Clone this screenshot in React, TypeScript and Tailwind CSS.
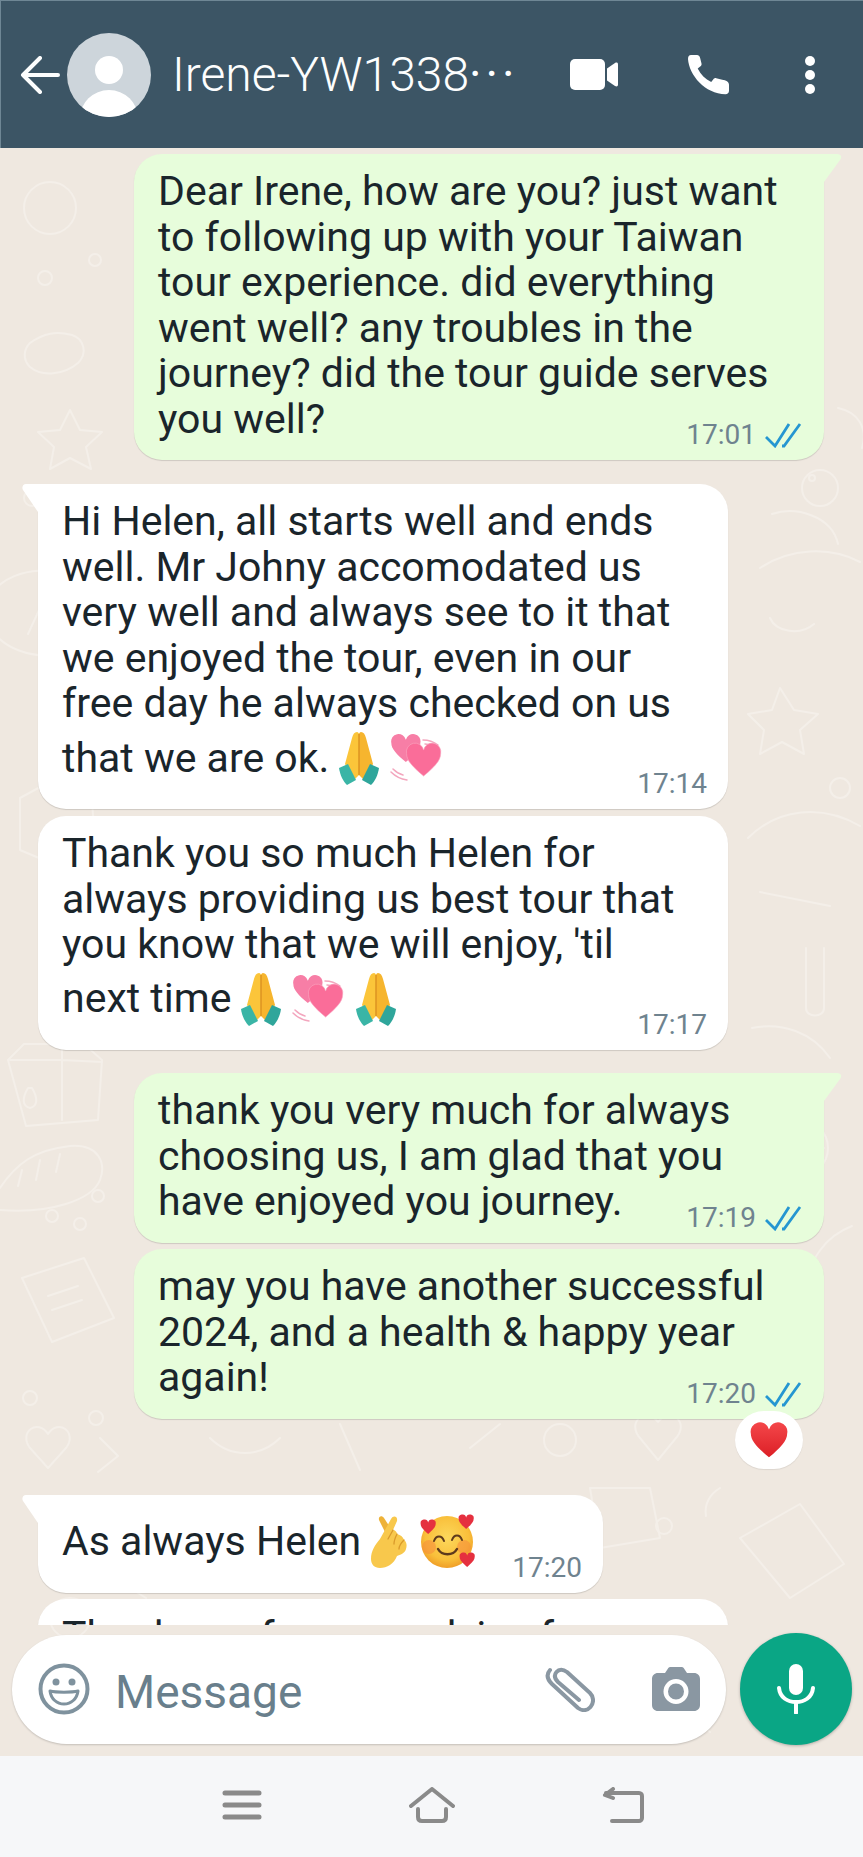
import type { ReactNode } from 'react'

const HEART = 'M12 22C5 16 1 12 1 7.5A5.6 5.6 0 0 1 12 5.2 5.6 5.6 0 0 1 23 7.5C23 12 19 16 12 22Z'

function Pray({ className = '' }: { className?: string }) {
  return (
    <svg className={className} width="40" height="54" viewBox="0 0 40 54">
      <path d="M18 1C15.500 1 14 3 13 7L6 33C8 37 13 43 16 48L20 44V3C20 2 19 1 18 1Z" fill="#fbc53a" />
      <path d="M22 1C24.500 1 26 3 27 7L34 33C32 37 27 43 24 48L20 44V3C20 2 21 1 22 1Z" fill="#f6b52e" />
      <path d="M20 3V44" stroke="#dd9322" strokeWidth="1.500" />
      <path d="M0 37L9 33L17 49L8 54C4 50 1 44 0 37Z" fill="#3ab5a6" />
      <path d="M40 37L31 33L23 49L32 54C36 50 39 44 40 37Z" fill="#2fa69b" />
    </svg>
  )
}

function Hearts({ className = '' }: { className?: string }) {
  return (
    <svg className={className} width="52" height="50" viewBox="0 0 52 50" fill="none">
      <path d="M33 7C39 7 44 9 48 12M35 11C39 11 42 12 45 14" stroke="#f3a6be" strokeWidth="1.500" strokeLinecap="round" />
      <path d="M1 39C5 43 10 46 17 47M3 36C6 39 9 41 13 42" stroke="#f3a6be" strokeWidth="1.500" strokeLinecap="round" />
      <g transform="translate(0 0) scale(1.320)">
        <path d={HEART} fill="#f77ea6" />
      </g>
      <g transform="translate(15 9) scale(1.550)">
        <path d={HEART} fill="#fa6d99" stroke="#f9a8c2" strokeWidth=".4" />
      </g>
    </svg>
  )
}

function CrossedFingers({ className = '' }: { className?: string }) {
  return (
    <svg className={className} width="38" height="54" viewBox="0 0 38 54">
      <path d="M9 5C8 1 12 0 14 3L25 20L18 23Z" fill="#eeb238" />
      <path d="M1 44C1 36 5 30 10 24L21 4C23 0 28 1 27 6L23 15C25 15 27 17 27 19C31 20 33 22 34 25C37 27 37 31 36 34C35 38 30 40 27 41C24 49 17 53 10 53C4 53 1 49 1 44Z" fill="#f8c84c" />
      <path d="M23 15L18 24M27 19C25 23 24 26 24 29M34 25C31 28 29 31 29 34" fill="none" stroke="#d99a2b" strokeWidth="1.300" strokeLinecap="round" />
    </svg>
  )
}

function SmilingHearts({ className = '' }: { className?: string }) {
  return (
    <svg className={className} width="55" height="55" viewBox="0 0 55 55">
      <defs>
        <radialGradient id="face" cx="50%" cy="42%" r="60%">
          <stop offset="0%" stopColor="#fcd85c" />
          <stop offset="70%" stopColor="#f9bf3a" />
          <stop offset="100%" stopColor="#ee9a25" />
        </radialGradient>
      </defs>
      <circle cx="27" cy="28" r="26" fill="url(#face)" />
      <circle cx="9" cy="33" r="7" fill="#f58a3c" opacity=".55" />
      <circle cx="44" cy="33" r="7" fill="#f58a3c" opacity=".55" />
      <path d="M14 27C16 21 22 21 24 27M32 26C34 20 40 20 42 26" fill="none" stroke="#5e3a1c" strokeWidth="2" strokeLinecap="round" />
      <path d="M18 35C22 42 33 42 37 35" fill="none" stroke="#5e3a1c" strokeWidth="2.500" strokeLinecap="round" />
      <g transform="translate(0 5) scale(.68)">
        <path d={HEART} fill="#e5303f" />
      </g>
      <g transform="translate(38 0) scale(.68)">
        <path d={HEART} fill="#e5303f" />
      </g>
      <g transform="translate(39 38) scale(.68)">
        <path d={HEART} fill="#e5303f" />
      </g>
    </svg>
  )
}

function Ticks() {
  return (
    <svg width="38" height="25" viewBox="0 0 38 25" fill="none" stroke="#2596d1" strokeWidth="2.800">
      <path d="M1 14L10 23L24 1" />
      <path d="M17 23L19 23L35 1" />
    </svg>
  )
}

function Tail({ side }: { side: 'in' | 'out' }) {
  if (side === 'out') {
    return (
      <svg className="absolute left-full top-0" width="18" height="28" viewBox="0 0 18 28">
        <path d="M0 0H13C17 0 18.500 3 16 6L0 28Z" fill="#e7fddb" />
      </svg>
    )
  }
  return (
    <svg className="absolute right-full top-0" width="16" height="28" viewBox="0 0 16 28">
      <path d="M16 0H4C1 0 -.5 3 1 6L16 28Z" fill="#ffffff" />
    </svg>
  )
}

interface BubbleProps {
  side: 'in' | 'out'
  time?: string
  height: string
  width?: string
  tail?: boolean
  children: ReactNode
  extra?: ReactNode
  className?: string
}

function Bubble({ side, time, height, width = 'w-[690px]', tail, children, extra, className = '' }: BubbleProps) {
  const out = side === 'out'
  return (
    <div
      className={`relative grid shrink-0 ${width} ${height} ${className} pl-6 pr-[21px] pb-[10px] rounded-[28px] shadow-[0_1px_1px_rgba(0,0,0,0.14)] ${
        out ? 'self-end mr-[39px] bg-[#e7fddb]' : 'self-start ml-[38px] bg-white'
      } ${tail ? (out ? 'rounded-tr-none' : 'rounded-tl-none') : ''}`}
    >
      {tail && <Tail side={side} />}
      <div className="[grid-area:1/1] pt-[15px] text-[41px] leading-[45.6px] text-[#1a252b] whitespace-nowrap">{children}</div>
      {time && (
        <div className="[grid-area:1/1] self-end justify-self-end flex items-center gap-[9px] h-[30px] text-[28px] text-[#6f838f]">
          <span>{time}</span>
          {out && <Ticks />}
        </div>
      )}
      {extra}
    </div>
  )
}

function EmojiRow({ children }: { children: ReactNode }) {
  return <div className="flex items-center h-[63px]">{children}</div>
}

function Wallpaper() {
  return (
    <svg className="absolute inset-0 w-full h-full" viewBox="0 0 863 1608" fill="none" stroke="#f4efe9" strokeWidth="2" strokeLinecap="round" strokeLinejoin="round">
      {/* left side */}
      <circle cx="50" cy="60" r="26" />
      <circle cx="45" cy="130" r="7" />
      <circle cx="95" cy="112" r="6" />
      <path d="M30 195c14-10 26-12 42-8 12 4 16 18 6 28-14 12-36 14-48 4-8-8-6-18 0-24z" />
      <path d="M70 262l10 20 22 2-16 15 5 22-21-11-20 11 4-22-16-15 22-2z" />
      <circle cx="32" cy="350" r="8" />
      <circle cx="108" cy="352" r="7" />
      <path d="M-6 442c22-24 68-26 92-4 22 22 14 56-18 66-34 10-70-4-80-30" />
      <path d="M40 460l-12 26M56 462l-12 30" />
      <path d="M20 650l22-12 50 16 4 50-38 14-38-16z" />
      <path d="M8 912l16-16h60l18 16 -4 60-72 6z" />
      <path d="M62 896v76M10 912h52l40 2" />
      <path d="M28 940c-6 10-6 18 2 20 8-2 8-10 2-20z" />
      <path d="M0 1040c16-24 34-38 70-42 30-2 36 18 30 34-8 20-50 34-100 30" />
      <path d="M22 1022l-4 16M40 1012l-4 20M60 1006l-4 18" />
      <circle cx="52" cy="1068" r="6" />
      <circle cx="80" cy="1076" r="6" />
      <circle cx="98" cy="1048" r="6" />
      <path d="M22 1130l62-20 30 60-62 24z" />
      <path d="M48 1148l30-10M52 1162l30-10" />
      <path d="M30 1300c-12-16 8-30 18-14 10-16 30-2 18 14l-18 20z" />
      <circle cx="30" cy="1250" r="7" />
      <circle cx="96" cy="1270" r="7" />
      {/* right side */}
      <circle cx="820" cy="340" r="18" />
      <path d="M838 260c20 4 30 20 24 40" />
      <circle cx="790" cy="296" r="6" />
      <path d="M772 366c24-8 60 2 66 30" />
      <circle cx="812" cy="330" r="3" />
      <path d="M760 420c30-20 70-22 100-6M770 470c6 14 30 18 44 6" />
      <path d="M780 540l14 22 24 4-18 16 4 24-22-12-22 12 4-24-16-16 24-4z" />
      <circle cx="840" cy="640" r="10" />
      <path d="M748 690c30-30 74-34 112-12M760 744l70 14" />
      <path d="M806 800v60c0 10 18 10 18 0v-60" />
      <path d="M752 880c30-6 60 4 78 30M790 950l-30 20" />
      <circle cx="800" cy="1000" r="28" />
      <path d="M776 1000h48M800 972c-12 18-12 38 0 56" />
      <path d="M852 1078c-26 10-44 34-44 60" />
      <circle cx="760" cy="1130" r="7" />
      <path d="M640 1290c-14-16 6-32 18-16 12-16 32 0 18 16l-18 22z" />
      <path d="M740 1390l60-34 44 60-54 34z" />
      <path d="M720 1340c-10 6-16 16-14 28" />
      <circle cx="664" cy="1378" r="8" />
      {/* bottom */}
      <path d="M100 1290l18 18-20 16M210 1290c20 20 50 20 70 0M340 1276l20 46M470 1300l30-24" />
      <circle cx="560" cy="1292" r="16" />
      <path d="M590 1340h60l10 50-60 10z" />
      <path d="M130 1440l16 10M780 1558c16-18 40-18 56 0M660 1580c20-14 36-14 50 4" />
      <circle cx="70" cy="1470" r="20" />
    </svg>
  )
}

export default function App() {
  return (
    <div className="w-[863px] h-[1857px] flex flex-col overflow-hidden font-['Roboto',sans-serif]">
      {/* Header */}
      <header className="h-[148px] shrink-0 flex items-center bg-[#3c5565] border-t border-l border-[#6f8795] pl-[19px] pr-[48px] text-[#fdfefe]">
        <svg width="40" height="38" viewBox="0 0 40 38" fill="none" stroke="currentColor" strokeWidth="4" strokeLinecap="round" strokeLinejoin="round">
          <path d="M38 19H3M20 2L3 19L20 36" />
        </svg>
        <svg className="ml-[7px]" width="84" height="84" viewBox="0 0 84 84">
          <defs>
            <clipPath id="avatar">
              <circle cx="42" cy="42" r="42" />
            </clipPath>
          </defs>
          <circle cx="42" cy="42" r="42" fill="#cdd5db" />
          <circle cx="42" cy="37" r="14" fill="#ffffff" />
          <ellipse cx="42" cy="85" rx="29" ry="28" fill="#ffffff" clipPath="url(#avatar)" />
        </svg>
        <span className="ml-[21px] text-[48px] font-light leading-none whitespace-nowrap">
          Irene-YW1338<span className="tracking-[4px] font-normal">···</span>
        </span>
        <svg className="ml-auto" width="48" height="31" viewBox="0 0 48 31" fill="#ffffff">
          <rect x="0" y="0" width="35" height="31" rx="5" />
          <path d="M37 9.500L45 4C46.500 3 48 3.500 48 5.500V25.500C48 27.500 46.500 28 45 27L37 21.500Z" />
        </svg>
        <svg className="ml-[70px]" width="42" height="41" viewBox="0 0 42 41" fill="#ffffff">
          <path d="M3 1H9C10.500 1 11.500 2 12 3.500L13.500 9.500C13.800 10.800 13.200 11.800 12.200 12.500L9.700 14.500C12.700 20.500 17.200 25 23.200 28L25.200 25.500C26 24.500 27 23.900 28.200 24.200L34.200 25.700C38 26.200 41 27.700 41 30.700V36.700C41 38.700 39.500 40.200 37.500 40.200C17 40 1 21 0 5C0 2.500 1 1 3 1Z" />
        </svg>
        <div className="ml-[75px] flex flex-col gap-[4px]">
          <span className="w-[10px] h-[10px] rounded-full bg-white" />
          <span className="w-[10px] h-[10px] rounded-full bg-white" />
          <span className="w-[10px] h-[10px] rounded-full bg-white" />
        </div>
      </header>

      <main className="relative flex-1 flex flex-col bg-[#efe8e0] overflow-hidden">
        <Wallpaper />

        {/* Messages */}
        <div className="relative h-[1477px] shrink-0 overflow-hidden flex flex-col pt-[6px]">
          <Bubble side="out" tail time="17:01" height="h-[306px]">
            Dear Irene, how are you? just want<br />
            to following up with your Taiwan<br />
            tour experience. did everything<br />
            went well? any troubles in the<br />
            journey? did the tour guide serves<br />
            you well?
          </Bubble>

          <Bubble side="in" tail time="17:14" height="h-[325px]" className="mt-[24px]">
            Hi Helen, all starts well and ends<br />
            well. Mr Johny accomodated us<br />
            very well and always see to it that<br />
            we enjoyed the tour, even in our<br />
            free day he always checked on us
            <EmojiRow>
              that we are ok.
              <Pray className="ml-[10px]" />
              <Hearts className="ml-[11px]" />
            </EmojiRow>
          </Bubble>

          <Bubble side="in" time="17:17" height="h-[234px]" className="mt-[7px]">
            Thank you so much Helen for<br />
            always providing us best tour that<br />
            you know that we will enjoy, 'til
            <EmojiRow>
              next time
              <Pray className="ml-[10px]" />
              <Hearts className="ml-[11px]" />
              <Pray className="ml-[12px]" />
            </EmojiRow>
          </Bubble>

          <Bubble side="out" tail time="17:19" height="h-[170px]" className="mt-[23px]">
            thank you very much for always<br />
            choosing us, I am glad that you<br />
            have enjoyed you journey.
          </Bubble>

          <Bubble
            side="out"
            time="17:20"
            height="h-[170px]"
            className="mt-[6px] z-10"
            extra={
              <div className="absolute right-[21px] top-[162px] w-[68px] h-[58px] rounded-full bg-white flex items-center justify-center shadow-[0_1px_1px_rgba(0,0,0,0.08)]">
                <svg width="42" height="38" viewBox="0 0 24 23">
                  <defs>
                    <linearGradient id="red" x1="0" y1="0" x2="0" y2="1">
                      <stop offset="0%" stopColor="#f4474a" />
                      <stop offset="100%" stopColor="#dc1f26" />
                    </linearGradient>
                  </defs>
                  <path d={HEART} fill="url(#red)" />
                </svg>
              </div>
            }
          >
            may you have another successful<br />
            2024, and a health &amp; happy year<br />
            again!
          </Bubble>

          <Bubble side="in" tail time="17:20" height="h-[98px]" width="w-[565px]" className="mt-[76px]">
            <EmojiRow>
              As always Helen
              <CrossedFingers className="ml-[9px]" />
              <SmilingHearts className="ml-[12px]" />
            </EmojiRow>
          </Bubble>

          <Bubble side="in" height="h-[98px]" className="mt-[6px]">
            Thank you for your advice for
          </Bubble>
        </div>

        {/* Composer */}
        <div className="relative flex items-center gap-[14px] pl-[12px] mt-[8px]">
          <div className="flex items-center w-[714px] h-[109px] rounded-full bg-white pl-[26px] pr-[26px] shadow-[0_1px_2px_rgba(0,0,0,0.18)]">
            <svg width="52" height="52" viewBox="0 0 52 52" fill="none">
              <circle cx="26" cy="26" r="23.500" stroke="#7f929e" strokeWidth="4" />
              <circle cx="18" cy="19" r="3.500" fill="#7f929e" />
              <circle cx="34" cy="19" r="3.500" fill="#7f929e" />
              <path d="M12 28C18 29.500 34 29.500 40 28C39 36 33 41 26 41C19 41 13 36 12 28Z" stroke="#7f929e" strokeWidth="3" strokeLinejoin="round" />
            </svg>
            <span className="ml-[25px] pt-[6px] text-[46px] leading-none text-[#697f8c]">Message</span>
            <svg className="ml-auto" width="50" height="46" viewBox="0 0 50 46" fill="none" stroke="#8a97a2" strokeWidth="4" strokeLinecap="round" strokeLinejoin="round">
              <path d="M34 34L13 16C9.500 12.500 9 9 11.500 6C14 3 18 3 22 6L45 27C49 31 49 37 45.500 41C42 45 37 45 33 42L7 18C2 13 1 8.500 5 4" />
            </svg>
            <svg className="ml-[57px]" width="48" height="44" viewBox="0 0 48 44">
              <path fillRule="evenodd" d="M6 6H13L16 1.500C16.500.5 17.500 0 18.500 0H29.500C30.500 0 31.500.5 32 1.500L35 6H42C45.500 6 48 8.500 48 12V38C48 41.500 45.500 44 42 44H6C2.500 44 0 41.500 0 38V12C0 8.500 2.500 6 6 6ZM24 12A12.500 12.500 0 1 0 24 37 12.500 12.500 0 1 0 24 12ZM24 16.500A8 8 0 1 1 24 32.500 8 8 0 1 1 24 16.500Z" fill="#8a97a2" />
            </svg>
          </div>
          <div className="flex items-center justify-center w-[112px] h-[112px] shrink-0 rounded-full bg-[#0aa685] shadow-[0_1px_3px_rgba(0,0,0,0.25)]">
            <svg width="38" height="50" viewBox="0 0 38 50" fill="none">
              <rect x="12" y="0" width="14" height="31" rx="7" fill="#ffffff" />
              <path d="M2 24C3 34 11 38 19 38C27 38 35 34 36 24" stroke="#ffffff" strokeWidth="4" strokeLinecap="round" />
              <path d="M19 38V49" stroke="#ffffff" strokeWidth="4" strokeLinecap="round" />
            </svg>
          </div>
        </div>
      </main>

      {/* Nav bar */}
      <nav className="h-[101px] shrink-0 flex items-center justify-center gap-[145px] bg-[#f6f7f9] pb-[4px] text-[#8a8a8a]">
        <svg width="46" height="34" viewBox="0 0 46 34" fill="none" stroke="currentColor" strokeWidth="5" strokeLinecap="round">
          <path d="M7 5H41M7 17H41M7 29H41" />
        </svg>
        <svg width="46" height="36" viewBox="0 0 46 36" fill="none" stroke="currentColor" strokeWidth="4" strokeLinecap="round" strokeLinejoin="round">
          <path d="M2 19L23 2L44 19M9 22V30C9 32.500 10.500 34 13 34H33C35.500 34 37 32.500 37 30V22" />
        </svg>
        <svg width="46" height="36" viewBox="0 0 46 36" fill="none" stroke="currentColor" strokeWidth="4" strokeLinecap="round" strokeLinejoin="round">
          <path d="M12 34H39C40.500 34 42 33 42 31V9C42 7.500 41 6 39 6H6" />
          <path d="M13 2L5 8L13 11" />
        </svg>
      </nav>
    </div>
  )
}
